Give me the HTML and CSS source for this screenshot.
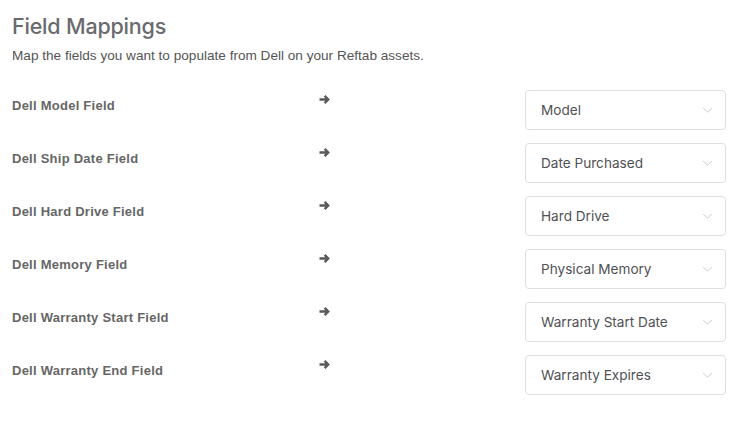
FILE: index.html
```html
<!DOCTYPE html>
<html>
<head>
<meta charset="utf-8">
<link rel="stylesheet" href="styles.css">
</head>
<body>
<div class="page">
  <h1 class="title">Field Mappings</h1>
  <p class="subtitle">Map the fields you want to populate from Dell on your Reftab assets.</p>
  <div class="rows">
    <div class="row"><div class="label">Dell Model Field</div><div class="arrow"><svg viewBox="0 0 12 11" width="12" height="11"><path d="M0.5 5.5h8M5.6 1.9L9.2 5.5 5.6 9.1" fill="none" stroke="#5a5a5e" stroke-width="2.4"/></svg></div><div class="select"><span>Model</span><svg class="chev" viewBox="0 0 12 8" width="11" height="7"><path d="M1 1l5 5 5-5" fill="none" stroke="#c4c4c8" stroke-width="1"/></svg></div></div>
    <div class="row"><div class="label">Dell Ship Date Field</div><div class="arrow"><svg viewBox="0 0 12 11" width="12" height="11"><path d="M0.5 5.5h8M5.6 1.9L9.2 5.5 5.6 9.1" fill="none" stroke="#5a5a5e" stroke-width="2.4"/></svg></div><div class="select"><span>Date Purchased</span><svg class="chev" viewBox="0 0 12 8" width="11" height="7"><path d="M1 1l5 5 5-5" fill="none" stroke="#c4c4c8" stroke-width="1"/></svg></div></div>
    <div class="row"><div class="label">Dell Hard Drive Field</div><div class="arrow"><svg viewBox="0 0 12 11" width="12" height="11"><path d="M0.5 5.5h8M5.6 1.9L9.2 5.5 5.6 9.1" fill="none" stroke="#5a5a5e" stroke-width="2.4"/></svg></div><div class="select"><span>Hard Drive</span><svg class="chev" viewBox="0 0 12 8" width="11" height="7"><path d="M1 1l5 5 5-5" fill="none" stroke="#c4c4c8" stroke-width="1"/></svg></div></div>
    <div class="row"><div class="label">Dell Memory Field</div><div class="arrow"><svg viewBox="0 0 12 11" width="12" height="11"><path d="M0.5 5.5h8M5.6 1.9L9.2 5.5 5.6 9.1" fill="none" stroke="#5a5a5e" stroke-width="2.4"/></svg></div><div class="select"><span>Physical Memory</span><svg class="chev" viewBox="0 0 12 8" width="11" height="7"><path d="M1 1l5 5 5-5" fill="none" stroke="#c4c4c8" stroke-width="1"/></svg></div></div>
    <div class="row"><div class="label">Dell Warranty Start Field</div><div class="arrow"><svg viewBox="0 0 12 11" width="12" height="11"><path d="M0.5 5.5h8M5.6 1.9L9.2 5.5 5.6 9.1" fill="none" stroke="#5a5a5e" stroke-width="2.4"/></svg></div><div class="select"><span>Warranty Start Date</span><svg class="chev" viewBox="0 0 12 8" width="11" height="7"><path d="M1 1l5 5 5-5" fill="none" stroke="#c4c4c8" stroke-width="1"/></svg></div></div>
    <div class="row"><div class="label">Dell Warranty End Field</div><div class="arrow"><svg viewBox="0 0 12 11" width="12" height="11"><path d="M0.5 5.5h8M5.6 1.9L9.2 5.5 5.6 9.1" fill="none" stroke="#5a5a5e" stroke-width="2.4"/></svg></div><div class="select"><span>Warranty Expires</span><svg class="chev" viewBox="0 0 12 8" width="11" height="7"><path d="M1 1l5 5 5-5" fill="none" stroke="#c4c4c8" stroke-width="1"/></svg></div></div>
  </div>
</div>
</body>
</html>
```
FILE: styles.css
```css
html, body { margin: 0; padding: 0; background: #fff; }
.page { padding: 12px 17px 0 12px; font-family: "Liberation Sans", Arial, sans-serif; }
.title { margin: 0; font-family: "Inter", "Liberation Sans", sans-serif; font-weight: 500; font-size: 21.5px; line-height: 28px; color: #6a6a6e; letter-spacing: -0.2px; }
.subtitle { margin: 8px 0 0; font-size: 13.6px; line-height: 16px; color: #555; }
.rows { margin-top: 26px; display: flex; flex-direction: column; gap: 13px; }
.row { display: flex; align-items: flex-start; height: 40px; }
.label { width: 307px; padding-top: 8px; font-family: "Liberation Sans", Arial, sans-serif; font-size: 13px; font-weight: bold; color: #666; line-height: 16px; letter-spacing: 0.25px; }
.arrow { width: 206px; height: 11px; padding-top: 4px; display: flex; }
.arrow svg { display: block; }
.select { flex: 1; box-sizing: border-box; height: 40px; border: 1px solid #dedee3; border-radius: 4px; display: flex; align-items: center; justify-content: space-between; padding: 0 12px 0 15px; font-family: "Inter", "Liberation Sans", sans-serif; font-size: 13.6px; color: #505054; }
.chev { display: block; }
```
